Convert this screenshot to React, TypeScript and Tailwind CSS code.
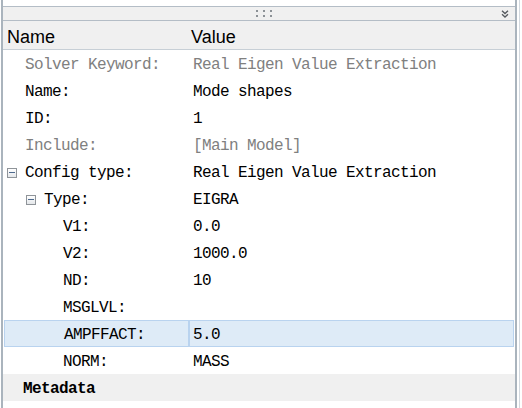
import React from "react";

type Row = {
  label: string;
  value?: string;
  level: number;
  muted?: boolean;
  expander?: boolean;
  selected?: boolean;
};

const rows: Row[] = [
  { label: "Solver Keyword:", value: "Real Eigen Value Extraction", level: 0, muted: true },
  { label: "Name:", value: "Mode shapes", level: 0 },
  { label: "ID:", value: "1", level: 0 },
  { label: "Include:", value: "[Main Model]", level: 0, muted: true },
  { label: "Config type:", value: "Real Eigen Value Extraction", level: 0, expander: true },
  { label: "Type:", value: "EIGRA", level: 1, expander: true },
  { label: "V1:", value: "0.0", level: 2 },
  { label: "V2:", value: "1000.0", level: 2 },
  { label: "ND:", value: "10", level: 2 },
  { label: "MSGLVL:", value: "", level: 2 },
  { label: "AMPFFACT:", value: "5.0", level: 2, selected: true },
  { label: "NORM:", value: "MASS", level: 2 },
];

const mono = "font-['Liberation_Mono',monospace] text-[16px] tracking-[-0.6px]";

const MinusBox = () => (
  <span className="flex h-[10px] w-[10px] items-center justify-center border border-[#8f9499] bg-gradient-to-b from-white to-[#e4e7ea]">
    <span className="h-[1px] w-[6px] bg-[#4e6a8e]" />
  </span>
);

const Grip = () => (
  <div className="flex gap-[5px]">
    {[0, 1, 2].map((i) => (
      <div key={i} className="flex flex-col gap-[3px]">
        <span className="h-[2px] w-[2px] bg-[#8c9196]" />
        <span className="h-[2px] w-[2px] bg-[#8c9196]" />
      </div>
    ))}
  </div>
);

function PropertyRow({ row }: { row: Row }) {
  const indent = row.level * 19;
  const text = row.muted ? "text-[#808080]" : "text-black";
  return (
    <div
      className={`flex h-[27px] items-center pt-[2px] ${
        row.selected ? "mx-[1px] border border-[#b9d3ef] bg-[#deebf7]" : "mx-[2px]"
      }`}
    >
      <div
        className={`-mt-[2px] flex h-[27px] w-[185px] shrink-0 items-center pt-[2px] ${
          row.selected ? "border-r-2 border-[#b9d3ef]" : ""
        }`}
        style={{ paddingLeft: indent + (row.selected ? 1 : 0) }}
      >
        <span className="flex w-[20px] justify-start pl-[2px]">{row.expander && <MinusBox />}</span>
        <span className={`${mono} ${text} whitespace-nowrap`}>{row.label}</span>
      </div>
      <span className={`${mono} ${text} whitespace-nowrap pl-[3px]`}>{row.value}</span>
    </div>
  );
}

export default function App() {
  return (
    <div className="flex h-[408px] w-[522px] overflow-hidden bg-white">
      <div className="ml-[1px] flex w-[516px] flex-col border-x-2 border-[#aab4bd]">
        <div className="h-[7px] border-b border-[#b4bdc6] bg-white" />
        <div className="relative flex h-[14px] items-center justify-center border-b border-[#b4bdc6] bg-[#f0f0f0]">
          <div className="ml-[10px]">
            <Grip />
          </div>
          <svg
            className="absolute right-[6px] top-[3px]"
            width="8"
            height="8"
            viewBox="0 0 8 8"
            fill="none"
            stroke="#55595e"
            strokeWidth="1.3"
          >
            <path d="M1 0.8 L4 3.6 L7 0.8" />
            <path d="M1 4.2 L4 7 L7 4.2" />
          </svg>
        </div>
        <div className="flex h-[29px] items-center border-b border-[#c7cfd6] bg-[#f0f0f0] pt-[5px] font-['Liberation_Sans',Arial,sans-serif] text-[18px] text-black">
          <span className="w-[188px] pl-[4px]">Name</span>
          <span>Value</span>
        </div>
        <div className="flex flex-col">
          {rows.map((r) => (
            <PropertyRow key={r.label} row={r} />
          ))}
          <div className="flex h-[27px] items-center bg-[#f0f0f0] pl-[20px] pt-[2px]">
            <span className={`${mono} font-bold text-black`}>Metadata</span>
          </div>
        </div>
      </div>
      <div className="ml-[2px] h-full w-[1px] bg-[#d3d9df]" />
    </div>
  );
}
